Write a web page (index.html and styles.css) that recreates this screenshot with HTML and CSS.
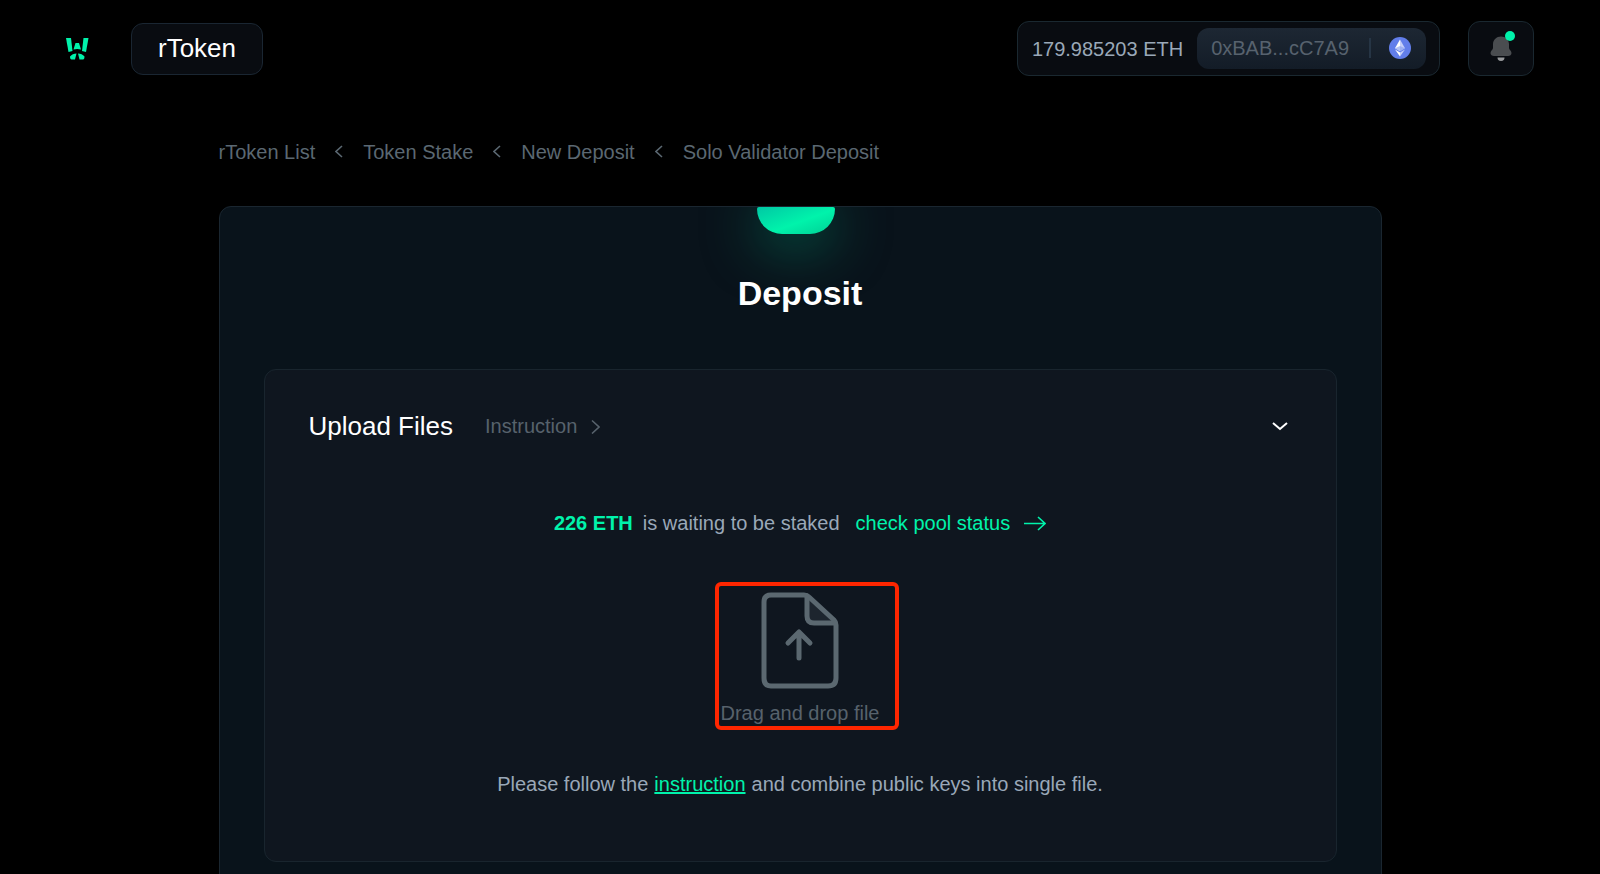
FILE: index.html
```html
<!DOCTYPE html>
<html lang="en">
<head>
<meta charset="utf-8">
<meta name="viewport" content="width=device-width, initial-scale=1">
<title>rToken - Deposit</title>
<link rel="stylesheet" href="styles.css">
</head>
<body>
<header class="topbar">
  <a class="logo" href="#" aria-label="Home">
    <svg width="24" height="22" viewBox="0 0 24 22" fill="#00f3ab" aria-hidden="true">
      <path d="M0 0H5L6.500 13L2.500 14Z"/>
      <path d="M22.500 0H17.500L16 13L20 14Z"/>
      <path d="M9.500 5H13L15 11.500Q11.200 10.500 7.500 11.500Z"/>
      <path d="M4 18.500Q6.500 15.500 10.500 15.500L9 21.500H5.500Q4 21.500 4 18.500Z"/>
      <path d="M18.500 18.500Q16 15.500 12 15.500L13.500 21.500H17Q18.500 21.500 18.500 18.500Z"/>
    </svg>
  </a>
  <button class="token-button" type="button">rToken</button>
  <div class="wallet">
    <span class="balance">179.985203 ETH</span>
    <button class="account" type="button">
      <span>0xBAB...cC7A9</span>
      <span class="divider"></span>
      <svg width="22" height="22" viewBox="0 0 22 22" aria-hidden="true">
        <circle cx="11" cy="11" r="11" fill="#627eea"/>
        <path d="M11 2.500L6 11.200L11 14.200Z" fill="#fff"/>
        <path d="M11 2.500L16 11.200L11 14.200Z" fill="#c5cff8"/>
        <path d="M6 11.200L11 9L16 11.200L11 14.200Z" fill="#8299ee" opacity=".6"/>
        <path d="M6 12.500L11 15.500V19.500Z" fill="#fff"/>
        <path d="M16 12.500L11 15.500V19.500Z" fill="#c5cff8"/>
      </svg>
    </button>
  </div>
  <button class="bell" type="button" aria-label="Notifications">
    <svg width="22" height="26" viewBox="0 0 22 26" aria-hidden="true">
      <path d="M11 0.500C6.500 0.500 3.200 3.800 3 8V12C3 13.500 0.500 15 0.500 17C0.500 19 2 20 4 20H18C20 20 21.500 19 21.500 17C21.500 15 19 13.500 19 12V8C18.800 3.800 15.500 0.500 11 0.500Z" fill="#4a4d50"/>
      <path d="M7.500 21.500H14.500C14.500 23.500 13.500 25 11 25C8.500 25 7.500 23.500 7.500 21.500Z" fill="#97999b"/>
    </svg>
    <span class="bell-dot"></span>
  </button>
</header>

<main class="page">
  <nav class="crumbs" aria-label="Breadcrumb">
    <a href="#">rToken List</a>
    <svg width="8" height="14" viewBox="0 0 8 14" aria-hidden="true"><path d="M7 1L1 6.500L7 12"/></svg>
    <a href="#">Token Stake</a>
    <svg width="8" height="14" viewBox="0 0 8 14" aria-hidden="true"><path d="M7 1L1 6.500L7 12"/></svg>
    <a href="#">New Deposit</a>
    <svg width="8" height="14" viewBox="0 0 8 14" aria-hidden="true"><path d="M7 1L1 6.500L7 12"/></svg>
    <a href="#">Solo Validator Deposit</a>
  </nav>

  <section class="card">
    <span class="glow"></span>
    <h1 class="title">Deposit</h1>
    <div class="panel">
      <div class="panel-head">
        <h2 class="panel-title">Upload Files</h2>
        <a class="help" href="#">Instruction
          <svg width="9" height="15" viewBox="0 0 9 15" aria-hidden="true"><path d="M1 1.500L8 8L1 14.500"/></svg>
        </a>
        <button class="toggle" type="button" aria-label="Collapse">
          <svg width="16" height="10" viewBox="0 0 16 10" aria-hidden="true"><path d="M1 2L8 8L15 2"/></svg>
        </button>
      </div>
      <p class="status">
        <strong>226 ETH</strong>
        <span>is waiting to be staked</span>
        <a href="#">check pool status
          <svg width="22" height="16" viewBox="0 0 22 16" aria-hidden="true"><path d="M0 8.500H21M14 2L21 8.500L14 15"/></svg>
        </a>
      </p>
      <label class="drop">
        <input class="file-input" type="file">
        <svg width="78" height="97" viewBox="0 0 78 97" aria-hidden="true">
          <path d="M45 3L75 31H52Q45 31 45 24Z" fill="#1d252e"/>
          <path d="M10 3H43Q46 3 48 5L73 28Q75 30 75 33V86Q75 94 67 94H10Q3 94 3 86V10Q3 3 10 3Z"/>
          <path d="M46 4V24Q46 31 53 31H74"/>
          <path d="M38 66V40M27 51L38 40L49 51"/>
        </svg>
        <span>Drag and drop file</span>
        <span class="highlight"></span>
      </label>
      <p class="note"><span>Please follow the</span><a href="#">instruction</a><span>and combine public keys into single file.</span></p>
    </div>
  </section>
</main>
</body>
</html>
```

FILE: styles.css
```css
* {
  box-sizing: border-box;
}

body {
  margin: 0;
  background: #000;
  color: #9aa8b8;
  font: 20px/24px "Liberation Sans", Arial, sans-serif;
}

h1, h2, p {
  margin: 0;
}

button {
  font: inherit;
  color: inherit;
  cursor: pointer;
}

a {
  color: inherit;
  text-decoration: none;
}

svg {
  display: block;
  flex: none;
}

.topbar {
  display: flex;
  align-items: center;
  padding: 21px 66px 0;
}

.logo {
  margin-right: 41px;
}

.token-button {
  padding: 8px 26px 10px;
  border: 1px solid #1a2632;
  border-radius: 12px;
  background: #090c11;
  color: #fff;
  font-size: 26px;
  line-height: 32px;
}

.wallet {
  display: flex;
  align-items: center;
  gap: 14px;
  margin-left: auto;
  padding: 6px 13px 6px 14px;
  border: 1px solid #1a2830;
  border-radius: 12px;
  background: #090c11;
}

.account {
  display: flex;
  align-items: center;
  gap: 18px;
  padding: 8px 15px 9px 14px;
  border: 0;
  border-radius: 12px;
  background: linear-gradient(#1d2733, #131c27);
  color: #57626e;
}

.divider {
  width: 2px;
  height: 20px;
  margin-left: 2px;
  background: #263545;
}

.bell {
  position: relative;
  display: grid;
  place-items: center;
  width: 66px;
  height: 55px;
  margin-left: 28px;
  padding: 0;
  border: 1px solid #1a2830;
  border-radius: 12px;
  background: #090c11;
}

.bell-dot {
  position: absolute;
  top: 9px;
  right: 18px;
  width: 10px;
  height: 10px;
  border-radius: 50%;
  background: #00f3ab;
}

.page {
  max-width: 1211px;
  margin: 0 auto;
  padding: 64px 24px 24px;
}

.crumbs {
  display: flex;
  align-items: center;
  gap: 20px;
  margin-bottom: 42px;
  color: #5b6872;
}

.crumbs svg,
.help svg,
.toggle svg,
.status svg {
  fill: none;
  stroke: currentColor;
  stroke-width: 1.6;
}

.card {
  position: relative;
  padding: 66px 44px 44px;
  overflow: hidden;
  border: 1px solid #1a2630;
  border-radius: 12px;
  background: #09131b;
}

.glow {
  position: absolute;
  top: 0;
  left: calc(50% - 43px);
  width: 78px;
  height: 27px;
  border-radius: 2px 2px 26px 26px;
  background: linear-gradient(160deg, #00c8a4, #00f3ab 55%, #00cf95);
  box-shadow: 0 8px 56px rgba(0, 130, 100, 0.9);
}

.title {
  position: relative;
  margin-bottom: 56px;
  color: #fff;
  font-size: 34px;
  line-height: 40px;
  text-align: center;
}

.panel {
  display: flex;
  flex-direction: column;
  align-items: center;
  padding: 40px 44px 65px;
  border: 1px solid #19252e;
  border-radius: 12px;
  background: #0f161f;
}

.panel-head {
  display: flex;
  align-items: center;
  align-self: stretch;
  margin-bottom: 69px;
}

.panel-title {
  color: #fff;
  font-size: 26px;
  font-weight: 400;
  line-height: 32px;
}

.help {
  display: flex;
  align-items: center;
  gap: 14px;
  margin-left: 32px;
  color: #57626c;
}

.toggle {
  margin-left: auto;
  padding: 4px;
  border: 0;
  background: none;
  color: #fff;
}

.toggle svg {
  stroke-width: 2;
}

.status {
  display: flex;
  align-items: center;
  margin-bottom: 57px;
}

.status strong {
  margin-right: 10px;
  color: #00f3ab;
}

.status a {
  display: flex;
  align-items: center;
  gap: 14px;
  margin-left: 16px;
  color: #00f3ab;
}

.drop {
  position: relative;
  display: flex;
  flex-direction: column;
  align-items: center;
  gap: 12px;
  margin-bottom: 47px;
  color: #57626c;
  cursor: pointer;
}

.drop svg {
  fill: none;
  stroke: #5b6870;
  stroke-width: 5;
  stroke-linecap: round;
  stroke-linejoin: round;
}

.drop svg path:first-child {
  stroke: none;
}

.file-input {
  position: absolute;
  width: 1px;
  height: 1px;
  opacity: 0;
}

.highlight {
  position: absolute;
  top: -10px;
  right: -20px;
  bottom: -5px;
  left: -6px;
  border: 4px solid #ff2600;
  border-radius: 6px;
}

.note {
  display: flex;
  gap: 6px;
}

.note a {
  color: #00f3ab;
  text-decoration: underline;
  text-decoration-thickness: 2px;
}
```
